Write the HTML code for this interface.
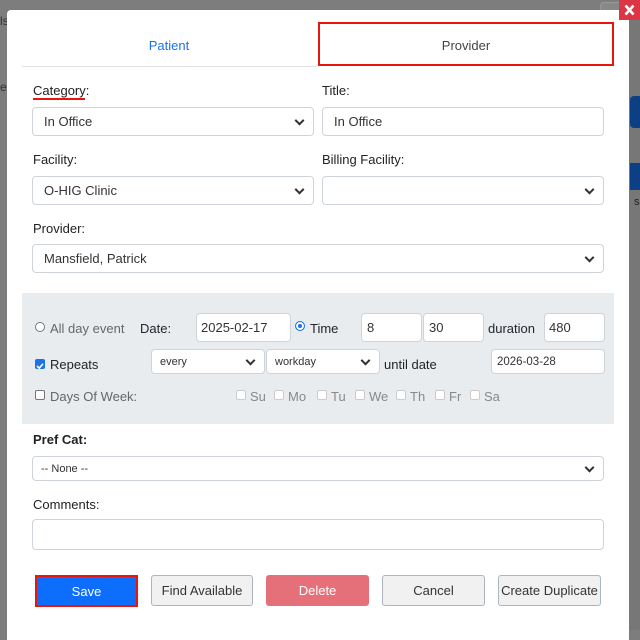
<!DOCTYPE html>
<html><head><meta charset="utf-8"><style>
*{box-sizing:border-box;margin:0;padding:0}
body{width:640px;height:630px;overflow:hidden;background:#7d7d7d;font-family:"Liberation Sans",sans-serif;font-size:13px;color:#212529;position:relative}
.a{position:absolute}
.modal{left:7px;top:10px;width:622px;height:630px;background:#fff;border-radius:4px 4px 0 0}
.lbl{font-size:13px;color:#222}
.in{background:#fff;border:1px solid #ced4da;border-radius:4px;font-size:13px;color:#333;padding-left:11px;display:flex;align-items:center}
.sel::after{content:"";position:absolute;right:10px;top:50%;width:5px;height:5px;border-right:2px solid #333;border-bottom:2px solid #333;transform:translateY(-70%) rotate(45deg)}
.sm{font-size:12px;padding-left:8px}
.cb{width:10px;height:10px;border:1px solid #aaa;border-radius:2px;background:#fff}
.btn{border:1px solid #adb5bd;border-radius:3px;background:#f1f1f1;font-size:13px;color:#333;display:flex;align-items:center;justify-content:center}
.day{font-size:13px;color:#888}
</style></head><body>
<div class="a" style="left:0;top:14px;font-size:12px;color:#333">ls</div>
<div class="a" style="left:0;top:80px;font-size:12px;color:#333">er</div>
<div class="a" style="left:600px;top:2px;width:30px;height:14px;border:1px solid #999;border-radius:4px;background:#888"></div>
<div class="a" style="left:628px;top:0;width:12px;height:630px;background:#777"></div>
<div class="a" style="left:630px;top:96px;width:10px;height:32px;background:#0d3f85;border-radius:4px 0 0 4px"></div>
<div class="a" style="left:630px;top:163px;width:10px;height:27px;background:#0d3f85"></div>
<div class="a" style="left:634px;top:196px;font-size:11px;color:#222">s</div>
<div class="a modal"></div>
<div class="a" style="left:619px;top:0;width:21px;height:20px;background:#dc3545"><svg width="21" height="20"><path d="M6.5 5.5L14.5 14.5M14.5 5.5L6.5 14.5" stroke="#fff" stroke-width="2.6"/></svg></div>

<div class="a" style="left:22px;top:66px;width:294px;height:1px;background:#dee2e6"></div>
<div class="a" style="left:22px;top:38px;width:294px;text-align:center;color:#1a73e8;font-size:13px">Patient</div>
<div class="a" style="left:318px;top:22px;width:296px;height:44px;border:2px solid #e8160c;display:flex;align-items:center;justify-content:center;color:#444;font-size:13px;padding-top:2px">Provider</div>

<div class="a lbl" style="left:33px;top:83px">Category:</div>
<div class="a" style="left:33px;top:98px;width:52px;height:2px;background:#e8160c"></div>
<div class="a in sel" style="left:32px;top:107px;width:282px;height:29px">In Office</div>
<div class="a lbl" style="left:322px;top:83px">Title:</div>
<div class="a in" style="left:322px;top:107px;width:282px;height:29px">In Office</div>

<div class="a lbl" style="left:33px;top:152px">Facility:</div>
<div class="a in sel" style="left:32px;top:176px;width:282px;height:29px">O-HIG Clinic</div>
<div class="a lbl" style="left:322px;top:152px">Billing Facility:</div>
<div class="a in sel" style="left:322px;top:176px;width:282px;height:29px"></div>

<div class="a lbl" style="left:33px;top:221px">Provider:</div>
<div class="a in sel" style="left:32px;top:244px;width:572px;height:29px">Mansfield, Patrick</div>

<div class="a" style="left:22px;top:293px;width:592px;height:131px;background:#e9ecef"></div>
<div class="a" style="left:35px;top:322px;width:10px;height:10px;border:1px solid #777;border-radius:50%;background:#fff"></div>
<div class="a" style="left:50px;top:321px;color:#666">All day event</div>
<div class="a" style="left:140px;top:321px">Date:</div>
<div class="a in" style="left:196px;top:313px;width:95px;height:29px;padding-left:4px">2025-02-17</div>
<div class="a" style="left:295px;top:321px;width:10px;height:10px;border-radius:50%;background:#1a73e8;box-shadow:inset 0 0 0 2px #fff;border:1px solid #1a73e8"></div>
<div class="a" style="left:310px;top:321px">Time</div>
<div class="a in" style="left:361px;top:313px;width:61px;height:29px;padding-left:5px">8</div>
<div class="a in" style="left:423px;top:313px;width:61px;height:29px;padding-left:5px">30</div>
<div class="a" style="left:488px;top:321px">duration</div>
<div class="a in" style="left:544px;top:313px;width:61px;height:29px;padding-left:4px">480</div>

<div class="a" style="left:35px;top:359px;width:10px;height:10px;background:#1a73e8;border-radius:2px"><svg width="10" height="10"><path d="M2 5L4.2 7.2L8 2.8" stroke="#fff" stroke-width="1.6" fill="none"/></svg></div>
<div class="a" style="left:50px;top:357px">Repeats</div>
<div class="a in sel sm" style="left:151px;top:349px;width:114px;height:25px;font-size:11px">every</div>
<div class="a in sel sm" style="left:266px;top:349px;width:114px;height:25px;font-size:11px">workday</div>
<div class="a" style="left:384px;top:357px">until date</div>
<div class="a in sm" style="left:491px;top:349px;width:114px;height:25px;padding-left:5px;font-size:11.5px">2026-03-28</div>

<div class="a cb" style="left:35px;top:390px;border-color:#777"></div>
<div class="a" style="left:50px;top:389px;color:#666">Days Of Week:</div>
<div class="a cb" style="left:236px;top:390px;border-color:#ccc"></div><div class="a day" style="left:250px;top:389px">Su</div>
<div class="a cb" style="left:274px;top:390px;border-color:#ccc"></div><div class="a day" style="left:288px;top:389px">Mo</div>
<div class="a cb" style="left:317px;top:390px;border-color:#ccc"></div><div class="a day" style="left:331px;top:389px">Tu</div>
<div class="a cb" style="left:355px;top:390px;border-color:#ccc"></div><div class="a day" style="left:369px;top:389px">We</div>
<div class="a cb" style="left:396px;top:390px;border-color:#ccc"></div><div class="a day" style="left:410px;top:389px">Th</div>
<div class="a cb" style="left:435px;top:390px;border-color:#ccc"></div><div class="a day" style="left:449px;top:389px">Fr</div>
<div class="a cb" style="left:470px;top:390px;border-color:#ccc"></div><div class="a day" style="left:484px;top:389px">Sa</div>

<div class="a lbl" style="left:33px;top:432px;font-weight:bold">Pref Cat:</div>
<div class="a in sel sm" style="left:32px;top:456px;width:572px;height:25px;font-size:11px">-- None --</div>
<div class="a lbl" style="left:33px;top:497px">Comments:</div>
<div class="a in" style="left:32px;top:519px;width:572px;height:31px"></div>

<div class="a btn" style="left:35px;top:575px;width:103px;height:32px;background:#0d6efd;border:2px solid #e8160c;color:#fff;border-radius:0">Save</div>
<div class="a btn" style="left:151px;top:575px;width:102px;height:31px">Find Available</div>
<div class="a btn" style="left:266px;top:575px;width:103px;height:31px;background:#e5707a;border-color:#e5707a;color:#fff">Delete</div>
<div class="a btn" style="left:382px;top:575px;width:103px;height:31px">Cancel</div>
<div class="a btn" style="left:498px;top:575px;width:103px;height:31px">Create Duplicate</div>
</body></html>
